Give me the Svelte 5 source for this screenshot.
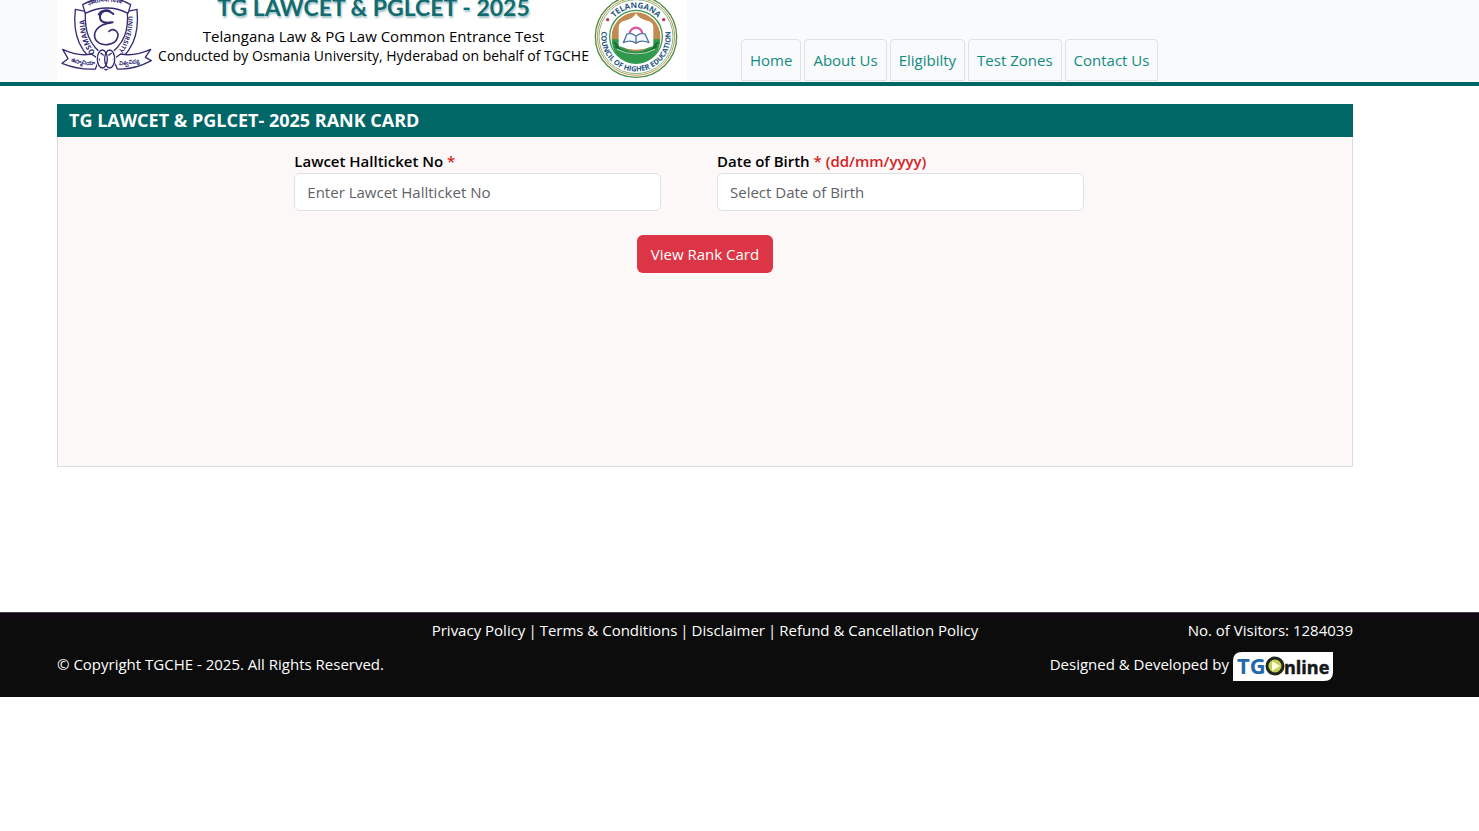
<script>
  const nav = ['Home', 'About Us', 'Eligibilty', 'Test Zones', 'Contact Us'];
  const policies = ['Privacy Policy', 'Terms & Conditions', 'Disclaimer', 'Refund & Cancellation Policy'];

  let hallticket = $state('');
  let birthDate = $state('');
</script>

<header>
  <div class="container head-row">
    <div class="banner">
      <svg class="crest" viewBox="21 0 300 246" role="img" aria-label="Osmania University">
        <defs>
          <path id="leftUp" d="M136 158 C112 130 104 98 104 44" />
          <path id="rightDown" d="M235 48 C234 95 226 128 194 170" />
          <path id="topArc" d="M108 22 Q172 -12 238 22" />
          <path id="ribbonL" d="M62 182 Q90 196 136 193" />
          <path id="ribbonR" d="M206 194 Q250 196 292 178" />
        </defs>
        <g fill="#fff" stroke="#332c72" stroke-width="4" stroke-linejoin="round">
          <path d="M76 28 C68 100 84 162 168 210 C252 162 268 100 261 28 L232 34 C236 90 226 132 168 172 C112 132 104 90 106 34 Z" />
          <path d="M98 14 Q170 -28 242 14 L234 40 Q172 8 106 40 Z" />
          <path d="M38 148 Q84 170 124 162 L148 178 L136 207 Q86 210 36 190 L54 176 Z" />
          <path d="M302 148 Q254 170 212 162 L190 178 L202 207 Q252 210 304 182 L286 172 Z" />
        </g>
        <g fill="none" stroke="#332c72">
          <ellipse cx="157" cy="177" rx="15" ry="27" stroke="#fff" stroke-width="9" />
          <ellipse cx="179" cy="177" rx="15" ry="27" stroke="#fff" stroke-width="9" />
          <ellipse cx="157" cy="177" rx="15" ry="27" stroke-width="4" />
          <ellipse cx="179" cy="177" rx="15" ry="27" stroke-width="4" />
          <path d="M190 42 C172 24 150 33 150 52 C150 68 168 70 188 67" stroke-width="6" stroke-linecap="round" />
          <path d="M183 68 C142 74 126 98 137 119 C151 142 195 138 203 112 C208 94 190 82 177 94" stroke-width="5" stroke-linecap="round" />
          <path d="M146 46 C150 34 166 28 180 34" stroke-width="7" />
        </g>
        <g fill="#332c72" class="crest-text">
          <text font-size="22"><textPath href="#leftUp">OSMANIA</textPath></text>
          <text font-size="19"><textPath href="#rightDown">UNIVERSITY</textPath></text>
          <text font-size="17"><textPath href="#topArc" startOffset="8">उस्मानिया विश्व</textPath></text>
          <text font-size="17"><textPath href="#ribbonL">ఉస్మానియా</textPath></text>
          <text font-size="17"><textPath href="#ribbonR">విశ్వవిద్య</textPath></text>
        </g>
      </svg>

      <div class="titles">
        <h1>TG LAWCET &amp; PGLCET - 2025</h1>
        <p class="exam">Telangana Law &amp; PG Law Common Entrance Test</p>
        <p>Conducted by Osmania University, Hyderabad on behalf of TGCHE</p>
      </div>

      <svg class="seal" viewBox="15 0 270 246" role="img" aria-label="Telangana Council of Higher Education">
        <defs>
          <path id="sealTop" d="M67 110 A86 86 0 0 1 239 110" />
          <path id="sealBottom" d="M53 82 A104 104 0 1 0 253 82" />
        </defs>
        <circle cx="153" cy="110" r="122" fill="#fff" stroke="#4f8c4a" stroke-width="4" />
        <circle cx="153" cy="110" r="116" fill="none" stroke="#b99a4c" stroke-width="3" />
        <circle cx="153" cy="110" r="111" fill="none" stroke="#4f8c4a" stroke-width="2" />
        <circle cx="153" cy="110" r="79" fill="#fff" stroke="#3f944b" stroke-width="4" />
        <circle cx="153" cy="110" r="73" fill="#c28a50" />
        <path d="M80 118 A73 73 0 0 0 226 118 L204 118 Q196 152 153 154 Q110 152 102 118 Z" fill="#2f9a4e" />
        <path d="M90 138 Q150 186 216 138 M86 126 L102 140 M220 126 L204 140" fill="none" stroke="#176b35" stroke-width="5" />
        <path d="M96 148 Q153 176 210 148" fill="none" stroke="#c9e3bd" stroke-width="3" />
        <path d="M101 138 V82 Q101 65 119 62 Q144 57 153 40 Q162 57 187 62 Q205 65 205 82 V138 Q153 160 101 138" fill="#fff" />
        <path d="M134 102 A19 19 0 1 1 172 102" fill="none" stroke="#df5ba5" stroke-width="7" />
        <path d="M153 108 Q139 96 126 102 L115 128 Q138 118 153 130 Q168 118 192 128 L180 102 Q167 96 153 108 V130" fill="#f1f7ff" stroke="#55719a" stroke-width="4" stroke-linejoin="round" />
        <circle cx="68" cy="59" r="5" fill="#c0355c" />
        <circle cx="236" cy="59" r="5" fill="#c0355c" />
        <g fill="#27577f" class="seal-text">
          <text font-size="24" text-anchor="middle"><textPath href="#sealTop" startOffset="50%">TELANGANA</textPath></text>
          <text font-size="22" text-anchor="middle"><textPath href="#sealBottom" startOffset="50%">COUNCIL OF HIGHER EDUCATION</textPath></text>
        </g>
      </svg>
    </div>

    <nav aria-label="Main">
      {#each nav as item}
        <a href="#top">{item}</a>
      {/each}
    </nav>
  </div>
</header>

<main>
  <div class="container">
    <section class="card">
      <h2>TG LAWCET &amp; PGLCET- 2025 RANK CARD</h2>
      <form onsubmit={(e) => e.preventDefault()}>
        <div class="fields">
          <div class="field">
            <label for="hallticket">Lawcet Hallticket No <span>*</span></label>
            <input id="hallticket" type="text" placeholder="Enter Lawcet Hallticket No" bind:value={hallticket} />
          </div>
          <div class="field">
            <label for="dob">Date of Birth <span>* (dd/mm/yyyy)</span></label>
            <input id="dob" type="text" placeholder="Select Date of Birth" bind:value={birthDate} />
          </div>
        </div>
        <button type="submit">View Rank Card</button>
      </form>
    </section>
  </div>
</main>

<footer>
  <div class="container foot-grid">
    <div class="policies">
      {#each policies as policy, i}
        {#if i > 0}<span>|</span>{/if}
        <a href="#top">{policy}</a>
      {/each}
    </div>
    <div class="visitors">No. of Visitors: 1284039</div>
    <div class="copyright">© Copyright TGCHE - 2025. All Rights Reserved.</div>
    <div class="developer">
      Designed &amp; Developed by
      <a class="tgonline" href="#top" aria-label="TGOnline">
        <svg viewBox="0 0 100 29" aria-hidden="true">
          <path d="M9 0H100V20Q100 29 91 29H0V9Q0 0 9 0Z" fill="#fff" />
          <text x="4" y="22" font-size="22" fill="#2468ad">TG</text>
          <circle cx="42" cy="14" r="8" fill="#c3d056" stroke="#20261b" stroke-width="3" />
          <path d="M39 9L47 14L39 19Z" fill="#fffde0" />
          <text x="51" y="22" font-size="18" fill="#151719" stroke="#151719" stroke-width="0.5">nline</text>
        </svg>
      </a>
    </div>
  </div>
</footer>

<style>
  :global(body) {
    background: #fff;
    color: #000;
    font: 15px/24px "Open Sans", "Noto Sans", sans-serif;
  }
  * { box-sizing: border-box; }
  a { color: inherit; text-decoration: none; }
  .container { max-width: 1320px; margin-left: 45px; padding: 0 12px; }

  header {
    overflow: hidden;
    background: #f8fafc;
    border-bottom: 4px solid #006666;
  }
  .head-row { display: flex; align-items: flex-end; gap: 54px; }
  .banner {
    display: flex;
    align-items: flex-end;
    width: 630px;
    height: 82px;
    padding-right: 7px;
    background: #fff;
  }
  .crest { flex: none; width: 100px; height: 82px; }
  .seal { flex: none; width: 90px; height: 82px; }
  .crest-text, .seal-text { font-family: "Open Sans", "Noto Sans", sans-serif; font-weight: 700; }
  .titles {
    flex: 1;
    padding-bottom: 16px;
    text-align: center;
    white-space: nowrap;
  }
  h1 {
    margin: 0;
    color: #126b6e;
    font-family: Lato, sans-serif;
    font-size: 23px;
    line-height: 38px;
    font-weight: 700;
    text-shadow: 1px 2px 2px #9fbfc6;
  }
  .titles p {
    margin: 0;
    font-size: 14px;
    line-height: 20px;
  }
  .titles .exam { font-size: 15px; }

  nav { display: flex; gap: 3px; padding-bottom: 1px; }
  nav a {
    padding: 8px;
    border: 1px solid #dee2e6;
    border-radius: 4px 4px 0 0;
    color: #148a80;
    white-space: nowrap;
  }

  main { padding: 18px 0 145px; }
  .card {
    min-height: 363px;
    border: 1px solid #dcdcdf;
    border-top: 0;
    background: #fcf8f8;
  }
  h2 {
    margin: 0 -1px;
    padding: 4px 12px 5px;
    background: #006666;
    color: #fff;
    font-size: 18px;
    line-height: 24px;
    font-weight: 700;
  }
  form { display: flex; flex-direction: column; align-items: center; padding-top: 12px; }
  .fields { display: flex; gap: 56px; width: 61%; margin-right: 32px; }
  .field { flex: 1; }
  label { display: block; font-weight: 600; }
  label span { color: #d51f26; }
  input {
    display: block;
    width: 100%;
    height: 38px;
    padding: 6px 12px;
    border: 1px solid #dee2e6;
    border-radius: 6px;
    background: #fff;
    color: #212529;
    font: inherit;
  }
  input::placeholder { color: #5f6368; opacity: 1; }
  button {
    margin-top: 24px;
    padding: 7px 14px;
    border: 0;
    border-radius: 6px;
    background: #dc3545;
    color: #fff;
    font: inherit;
  }

  footer {
    border-top: 1px solid #4a3a50;
    background: linear-gradient(#120614, #0c0c0c 8px);
    color: #fff;
  }
  .foot-grid {
    display: grid;
    grid-template-columns: 1fr auto 1fr;
    row-gap: 10px;
    padding-top: 5px;
    padding-bottom: 16px;
  }
  .policies { grid-column: 2; display: flex; gap: 3px; }
  .visitors { text-align: right; }
  .copyright { white-space: nowrap; }
  .developer {
    grid-column: 3;
    display: flex;
    align-items: flex-start;
    justify-content: flex-end;
    gap: 4px;
    padding-right: 20px;
    white-space: nowrap;
  }
  .tgonline { display: flex; }
  .tgonline svg { width: 100px; height: 29px; }
  .tgonline text { font-family: "Open Sans", sans-serif; font-weight: 700; }
</style>
